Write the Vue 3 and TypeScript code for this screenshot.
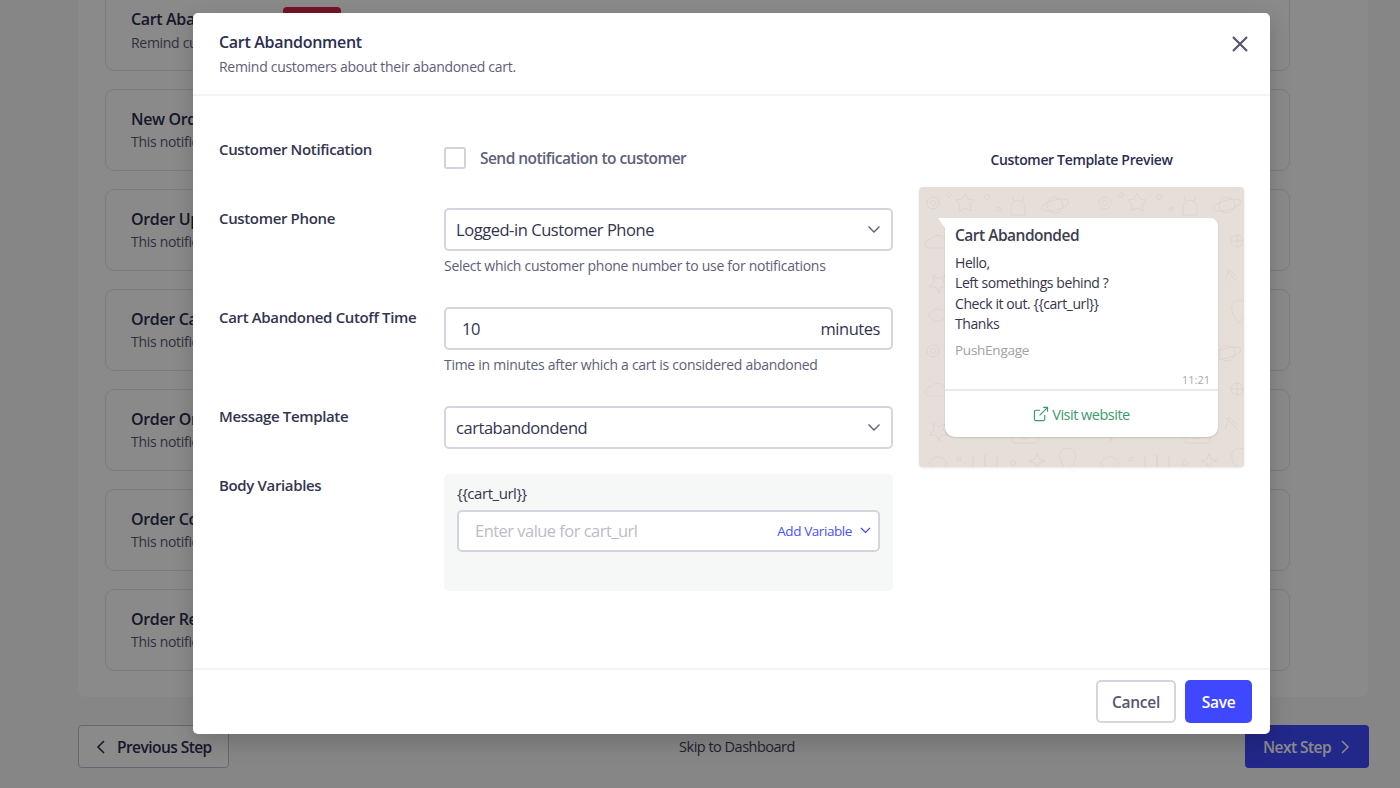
<script setup lang="ts">
const cards = [
  { title: 'Cart Abandonment', text: 'Remind customers about their abandoned cart.', badge: true },
  { title: 'New Order', text: 'This notification is sent for a new order.', badge: false },
  { title: 'Order Update', text: 'This notification is sent when an order updates.', badge: false },
  { title: 'Order Cancelled', text: 'This notification is sent when an order is cancelled.', badge: false },
  { title: 'Order On Hold', text: 'This notification is sent when an order is on hold.', badge: false },
  { title: 'Order Completed', text: 'This notification is sent when an order completes.', badge: false },
  { title: 'Order Refunded', text: 'This notification is sent when an order is refunded.', badge: false },
]
const variable = '{{cart_url}}'
const bodyLines = ['Hello,', 'Left somethings behind ?', `Check it out. ${variable}`, 'Thanks']
</script>

<template>
  <div class="page">
    <section class="panel">
      <article v-for="c in cards" :key="c.title" class="card">
        <div class="card-copy">
          <div class="card-head">
            <h3>{{ c.title }}</h3>
            <span v-if="c.badge" class="badge"></span>
          </div>
          <p>{{ c.text }}</p>
        </div>
        <div v-if="c.badge" class="card-tools">
          <span class="round"></span>
          <span class="switch"></span>
        </div>
      </article>
    </section>
    <nav class="steps">
      <button class="prev">
        <svg width="12" height="16" viewBox="0 0 12 16"><path d="M9 2 3 8l6 6" /></svg>
        Previous Step
      </button>
      <span class="skip">Skip to Dashboard</span>
      <button class="next">
        Next Step
        <svg width="12" height="16" viewBox="0 0 12 16"><path d="m3 2 6 6-6 6" /></svg>
      </button>
    </nav>

    <div class="backdrop"></div>

    <div class="modal">
      <header class="modal-head">
        <div>
          <h2>Cart Abandonment</h2>
          <p>Remind customers about their abandoned cart.</p>
        </div>
        <svg class="close" width="18" height="18" viewBox="0 0 18 18"><path d="M2 2l14 14M16 2 2 16" /></svg>
      </header>

      <div class="modal-body">
        <form class="form" @submit.prevent>
          <div class="row row-check">
            <label>Customer Notification</label>
            <div class="check-line">
              <span class="check"></span>
              <span>Send notification to customer</span>
            </div>
          </div>
          <div class="row row-hint">
            <label>Customer Phone</label>
            <div>
              <div class="control">
                <span>Logged-in Customer Phone</span>
                <svg class="chev" width="14" height="9" viewBox="0 0 14 9"><path d="m1.5 1.5 5.5 5.5 5.5-5.5" /></svg>
              </div>
              <p class="hint">Select which customer phone number to use for notifications</p>
            </div>
          </div>
          <div class="row row-hint">
            <label>Cart Abandoned Cutoff Time</label>
            <div>
              <div class="control number">
                <span>10</span>
                <span>minutes</span>
              </div>
              <p class="hint">Time in minutes after which a cart is considered abandoned</p>
            </div>
          </div>
          <div class="row">
            <label>Message Template</label>
            <div class="control">
              <span>cartabandondend</span>
              <svg class="chev" width="14" height="9" viewBox="0 0 14 9"><path d="m1.5 1.5 5.5 5.5 5.5-5.5" /></svg>
            </div>
          </div>
          <div class="row row-vars">
            <label>Body Variables</label>
            <div class="vars">
              <div class="var-name">{{ variable }}</div>
              <div class="var-input">
                <span class="placeholder">Enter value for cart_url</span>
                <span class="add">Add Variable</span>
                <svg class="chev-small" width="11" height="7" viewBox="0 0 11 7"><path class="chev-blue" d="m1 1 4.5 4.5L10 1" /></svg>
              </div>
            </div>
          </div>
        </form>

        <aside class="preview">
          <h4>Customer Template Preview</h4>
          <div class="wa">
            <svg class="doodles" width="325" height="280">
              <defs>
                <pattern id="doodle" width="172" height="148" patternUnits="userSpaceOnUse">
                  <g fill="none" stroke="#dcd4cc" stroke-width="1">
                    <circle cx="14" cy="16" r="6" />
                    <circle cx="14" cy="16" r="2.5" />
                    <path d="m46 6 3 6 6 1-4 5 1 6-6-3-6 3 1-6-4-5 6-1z" />
                    <circle cx="30" cy="8" r="2.2" />
                    <circle cx="68" cy="10" r="2.5" />
                    <circle cx="80" cy="22" r="1.8" />
                    <path d="M92 20c0-9 14-9 14 0v8H92zM95 15l-2-6M103 15l2-6" />
                    <ellipse cx="136" cy="18" rx="14" ry="5" transform="rotate(-15 136 18)" />
                    <circle cx="136" cy="18" r="8" />
                    <path d="M12 52c-6 0-8 7-3 9h16c6-1 6-9 0-9-2-5-10-5-13 0z" />
                    <path d="m54 44 3 3 4-1-1 4 3 3-4 1-1 4-3-3-4 1 1-4-3-3 4-1z" />
                    <circle cx="38" cy="42" r="1.8" />
                    <circle cx="78" cy="48" r="2" />
                    <path d="M94 58c0-10 16-14 24-6 6 7 0 16-10 14-6-1-14-2-14-8zM102 56l6 2" />
                    <circle cx="146" cy="54" r="6" />
                    <path d="M146 48v12M140 54h12" />
                    <circle cx="163" cy="38" r="2" />
                    <path d="M14 88l6 4 6-4-2 7 5 5-7 0-2 6-3-6-7 0 5-5z" />
                    <circle cx="46" cy="84" r="2.4" />
                    <circle cx="60" cy="92" r="10" />
                    <circle cx="60" cy="92" r="5" />
                    <path d="M60 82v-4M54 78h12" />
                    <circle cx="84" cy="80" r="1.8" />
                    <path d="M96 90h20c2 0 3 1 3 3v12c0 2-1 3-3 3H96c-2 0-3-1-3-3V93c0-2 1-3 3-3z" />
                    <circle cx="106" cy="99" r="5" />
                    <path d="M134 82l12 12M134 94l4-12 8 8" />
                    <circle cx="160" cy="90" r="2.2" />
                    <path d="M10 128c4-8 14-8 18 0-4 8-14 8-18 0z" />
                    <circle cx="40" cy="124" r="2" />
                    <path d="M54 120v10c0 8 12 8 12 0v-10M66 120v10c0 8 12 8 12 0v-10" />
                    <circle cx="94" cy="128" r="2.5" />
                    <path d="m118 118 2 6 6 2-6 2-2 6-2-6-6-2 6-2z" />
                    <path d="M142 116c4-4 12-4 14 2 3 6-4 14-8 18-4-4-10-14-6-20z" />
                  </g>
                </pattern>
              </defs>
              <rect width="325" height="280" fill="url(#doodle)" />
            </svg>
            <div class="bubble">
              <span class="tail"></span>
              <div class="bubble-main">
                <h5>Cart Abandonded</h5>
                <p v-for="l in bodyLines" :key="l" class="line">{{ l }}</p>
                <p class="sender">PushEngage</p>
                <div class="time">11:21</div>
              </div>
              <div class="visit">
                <svg width="16" height="16" viewBox="0 0 17 17"><path d="M12.5 9.5v4.7a1.3 1.3 0 0 1-1.3 1.3H2.8a1.3 1.3 0 0 1-1.3-1.3V5.8a1.3 1.3 0 0 1 1.3-1.3h4.7M7 10l8-8M10.8 1.5h4.7v4.7" /></svg>
                <span>Visit website</span>
              </div>
            </div>
          </div>
        </aside>
      </div>

      <footer class="modal-foot">
        <button class="cancel">Cancel</button>
        <button class="save">Save</button>
      </footer>
    </div>
  </div>
</template>

<style>
html, body { margin: 0; padding: 0; }
</style>

<style scoped>
* { box-sizing: border-box; }
.page {
  position: relative;
  width: 1400px;
  height: 788px;
  overflow: hidden;
  background: #f7f7f9;
  font-family: "Open Sans", "Noto Sans", sans-serif;
  color: #2c2e50;
}
h2, h3, h4, h5, p { margin: 0; }
.panel {
  margin: -40px 0 0 78px;
  width: 1290px;
  padding: 29px 78px 26px 27px;
  background: #fff;
  border-radius: 8px;
  display: flex;
  flex-direction: column;
  gap: 18px;
}
.card {
  height: 82px;
  border: 1px solid #e6e6ec;
  border-radius: 9px;
  padding: 2px 25px 0;
  display: flex;
  align-items: center;
  justify-content: space-between;
}
.card-head { display: flex; align-items: center; gap: 14px; }
.card h3 { font-size: 16px; font-weight: 600; letter-spacing: -0.35px; line-height: 22px; }
.card p { font-size: 14px; color: #585a74; letter-spacing: -0.3px; line-height: 24px; }
.badge { width: 58px; height: 24px; background: #d92643; border-radius: 4px; margin-left: -4px; }
.card-tools { display: flex; align-items: center; gap: 21px; margin-top: -4px; }
.round { width: 30px; height: 30px; border: 1px solid #4a4a4a; border-radius: 50%; }
.switch { width: 25px; height: 14px; background: #e6e6ec; border-radius: 3px; }
.steps {
  margin-top: 28px;
  padding-left: 78px;
  width: 1369px;
  display: flex;
  align-items: center;
  justify-content: space-between;
}
.steps button {
  height: 43px;
  border-radius: 4px;
  font: 600 15.5px "Open Sans", sans-serif;
  letter-spacing: -0.55px;
  display: flex;
  align-items: center;
  gap: 8px;
}
.steps svg path { fill: none; stroke: currentColor; stroke-width: 1.6; }
.prev { width: 151px; padding: 0 0 0 16px; background: #fff; border: 1px solid #bcbccb; color: #2c2e50; gap: 10px !important; }
.next { width: 124px; justify-content: center; background: #3f48ff; border: 0; color: #fff; }
.skip { font-size: 14.5px; color: #3e4058; letter-spacing: -0.5px; margin-left: 0; }
.backdrop { position: absolute; inset: 0; background: rgba(0, 0, 0, 0.46); }

.modal {
  position: absolute;
  left: 193px;
  top: 13px;
  width: 1077px;
  height: 721px;
  background: #fff;
  border-radius: 5px;
  box-shadow: 0 8px 22px rgba(0, 0, 0, 0.18);
  display: flex;
  flex-direction: column;
}
.modal-head {
  height: 83px;
  padding: 18px 21px 0 26px;
  border-bottom: 2px solid #f4f4f6;
  display: flex;
  justify-content: space-between;
  flex: none;
}
.modal-head h2 { font-size: 16px; font-weight: 600; line-height: 22px; letter-spacing: -0.3px; }
.modal-head p { margin-top: 3px; font-size: 14px; line-height: 22px; color: #5e6079; letter-spacing: -0.29px; }
.close { margin-top: 4px; }
.close path { stroke: #55566f; stroke-width: 2.2; fill: none; }

.modal-body { flex: 1; padding: 43px 26px 0; display: flex; gap: 26px; }
.form { width: 674px; display: flex; flex-direction: column; gap: 25px; }
.row { display: grid; grid-template-columns: 225px 449px; }
.row label { margin-top: -1px; font-size: 15px; font-weight: 600; line-height: 22px; letter-spacing: -0.35px; color: #33354f; white-space: nowrap; }
.row-vars label { margin-top: 0; }
.row-check { height: 44px; }
.row-hint { height: 74px; }
.check-line { padding-top: 8px; display: flex; align-items: flex-start; gap: 14px; font-size: 15.5px; font-weight: 600; color: #5e6079; letter-spacing: -0.54px; line-height: 22px; }
.check { width: 22px; height: 22px; border: 2px solid #d2d2dc; border-radius: 3px; }
.control {
  height: 43px;
  border: 2px solid #d5d5df;
  border-radius: 5px;
  padding: 0 10px 1px 10px;
  display: flex;
  align-items: center;
  justify-content: space-between;
  font-size: 16.5px;
  color: #33354f;
  letter-spacing: -0.45px;
}
.chev path { fill: none; stroke: #5a5c75; stroke-width: 1.3; }
.number { padding: 0 11px 1px 16px; }
.hint { margin-top: 5px; font-size: 14px; line-height: 20px; color: #5e6079; letter-spacing: -0.28px; white-space: nowrap; }
.vars { height: 117px; background: #f6f8f8; border-radius: 5px; padding: 9px 13px 0; }
.var-name { font-size: 15px; line-height: 20px; color: #33354f; letter-spacing: -0.45px; }
.var-input {
  margin-top: 7px;
  height: 42px;
  background: #fff;
  border: 2px solid #d5d5df;
  border-radius: 5px;
  padding: 0 7px 1px 16px;
  display: flex;
  align-items: center;
  font-size: 16.5px;
}
.placeholder { flex: 1; color: #bcbcc8; letter-spacing: -0.53px; }
.add { font-size: 13.5px; color: #4a52ff; letter-spacing: -0.42px; margin-right: 8px; }
.chev-blue { fill: none; stroke: #3f48ff; stroke-width: 1.2; }

.preview { width: 325px; padding-top: 11px; }
.preview h4 { font-size: 14px; font-weight: 600; line-height: 20px; text-align: center; letter-spacing: -0.34px; color: #2c2e50; }
.wa {
  position: relative;
  margin-top: 17px;
  height: 280px;
  padding: 31px 26px 0;
  background: #e6dfd9;
  border-radius: 4px;
  box-shadow: 0 1px 3px rgba(0, 0, 0, 0.1);
  overflow: hidden;
}
.doodles { position: absolute; left: 0; top: 0; }
.bubble {
  position: relative;
  height: 219px;
  background: #fff;
  border-radius: 0 8px 10px 10px;
  box-shadow: 0 1px 2px rgba(0, 0, 0, 0.14);
  display: flex;
  flex-direction: column;
}
.tail {
  position: absolute;
  left: -7px;
  top: 0;
  width: 0;
  height: 0;
  border-top: 10px solid #fff;
  border-left: 7px solid transparent;
}
.bubble-main { height: 173px; padding: 7px 8px 0 10px; border-bottom: 2px solid #e9e9ee; }
.bubble h5 { font-size: 15.5px; font-weight: 600; line-height: 20px; color: #3d3e4f; letter-spacing: -0.5px; margin-bottom: 8px; }
.line { font-size: 14px; line-height: 20.4px; color: #35364a; letter-spacing: -0.42px; }
.sender { margin-top: 5px; font-size: 13.5px; line-height: 20px; color: #a0a0a8; letter-spacing: -0.25px; }
.time { margin-top: 13px; text-align: right; font-size: 11px; line-height: 14px; color: #a8a8ae; }
.visit { flex: 1; display: flex; align-items: center; justify-content: center; gap: 3px; color: #3b9a6b; font-size: 14.5px; letter-spacing: -0.5px; }
.visit svg path { fill: none; stroke: currentColor; stroke-width: 1.2; }

.modal-foot {
  flex: none;
  height: 66px;
  border-top: 2px solid #f4f4f6;
  padding: 10px 18px 0 0;
  display: flex;
  justify-content: flex-end;
  align-items: flex-start;
  gap: 9px;
}
.modal-foot button { height: 43px; border-radius: 5px; font: 600 15.5px "Open Sans", sans-serif; letter-spacing: -0.3px; }
.cancel { width: 80px; background: #fff; border: 2px solid #d5d5df; color: #55566f; }
.save { width: 67px; background: #3f48ff; border: 0; color: #fff; }
</style>
